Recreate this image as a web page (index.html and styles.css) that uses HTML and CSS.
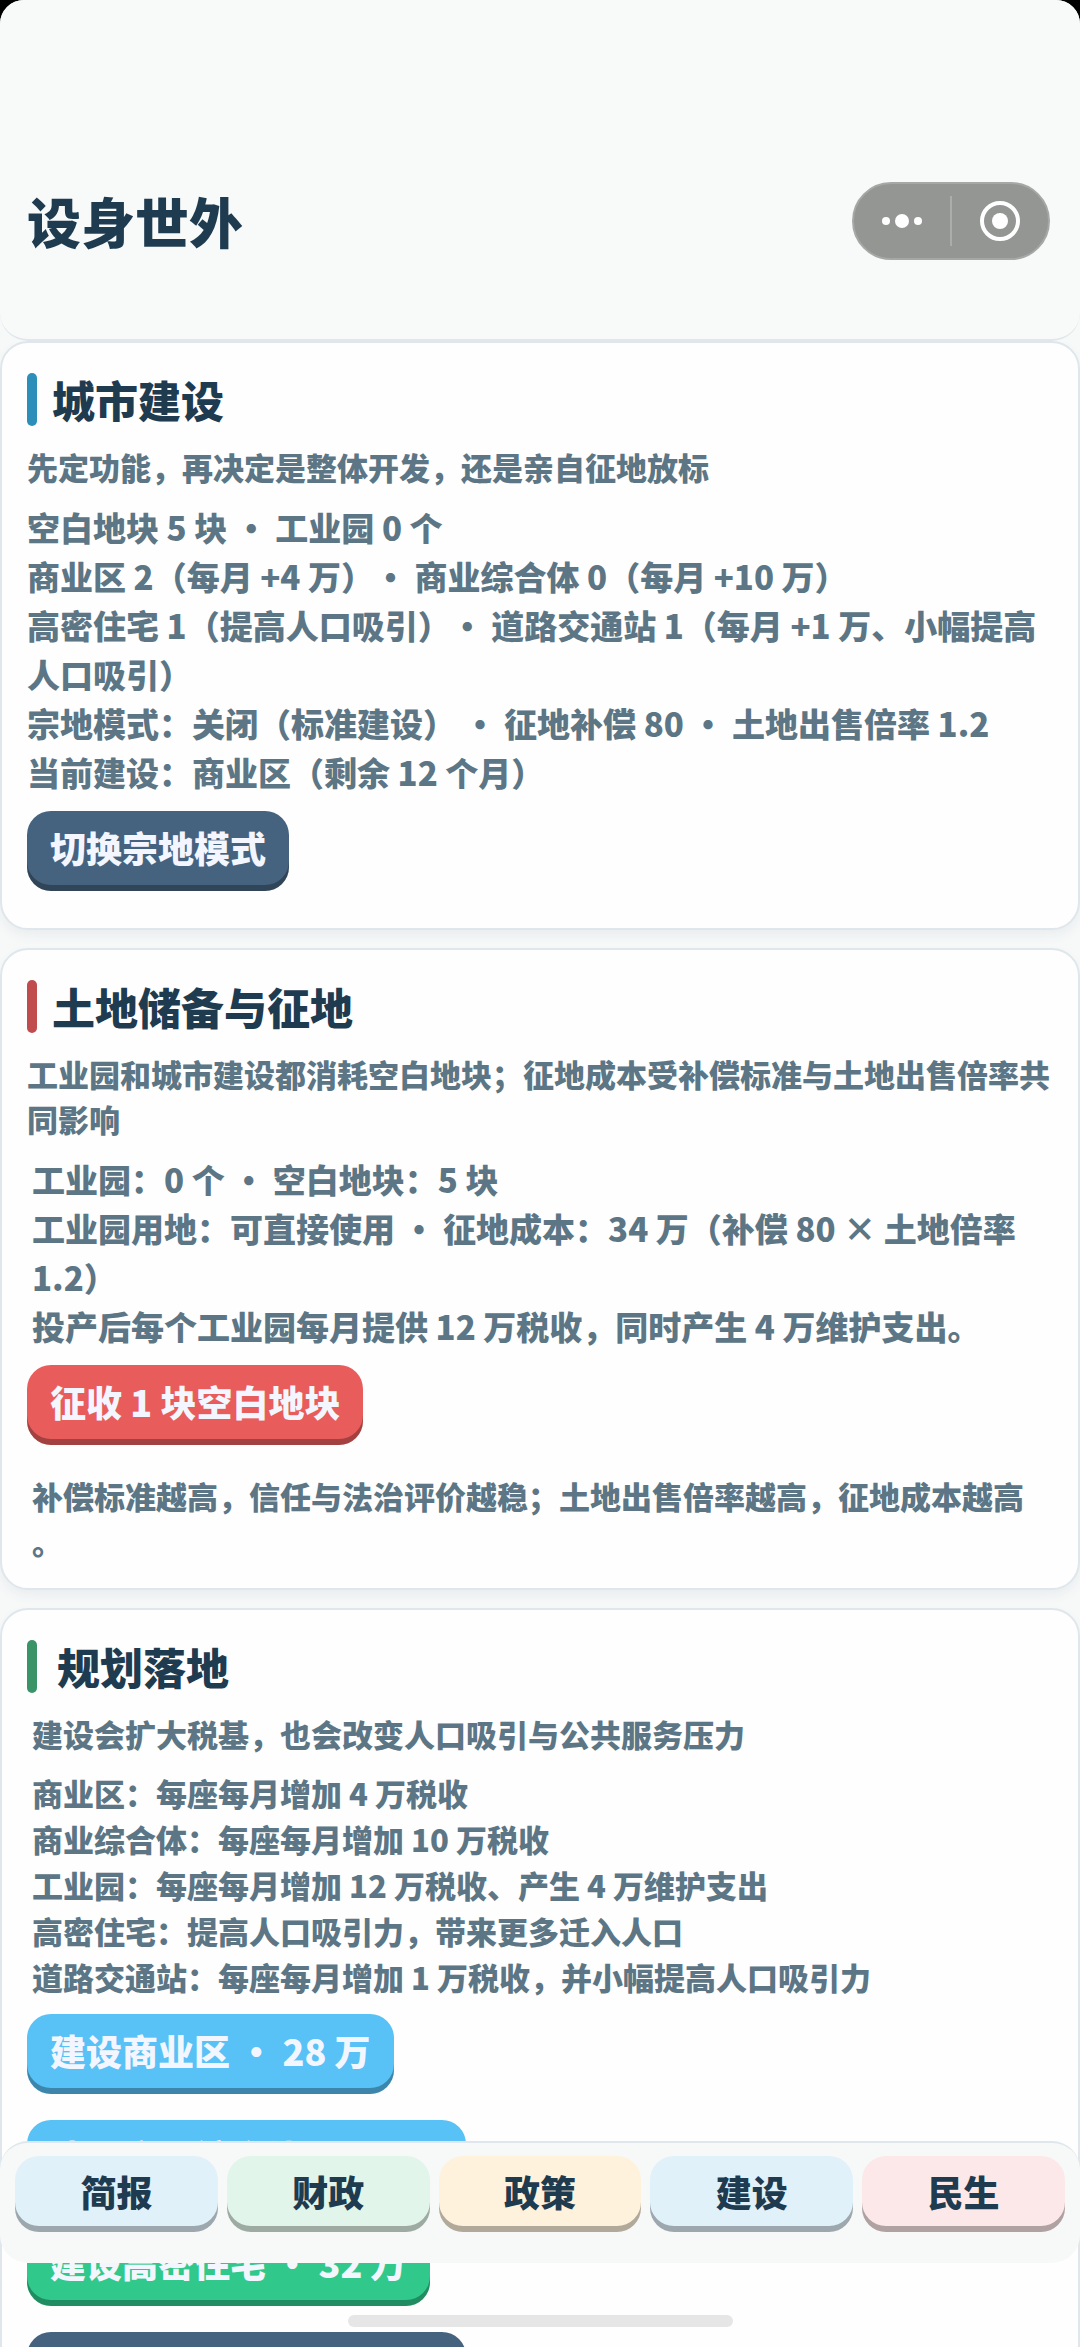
FILE: index.html
```html
<!DOCTYPE html>
<html lang="zh-CN">
<head>
  <meta charset="UTF-8">
  <meta name="viewport" content="width=device-width, initial-scale=1.0">
  <title>设身世外</title>
  <link rel="stylesheet" href="styles.css">
</head>
<body>
  <div class="app">
    <header class="top">
      <h1>设身世外</h1>
      <div class="capsule">
        <button type="button" aria-label="更多">
          <svg width="44" height="44" viewBox="0 0 44 44" fill="#fff">
            <circle cx="6" cy="22" r="4"/>
            <circle cx="22" cy="22" r="7"/>
            <circle cx="38" cy="22" r="4"/>
          </svg>
        </button>
        <button type="button" aria-label="关闭">
          <svg width="44" height="44" viewBox="0 0 44 44">
            <circle cx="22" cy="22" r="18" fill="none" stroke="#fff" stroke-width="4"/>
            <circle cx="22" cy="22" r="8" fill="#fff"/>
          </svg>
        </button>
      </div>
    </header>

    <main class="content">
      <section class="card">
        <h2 class="blue">城市建设</h2>
        <p class="desc">先定功能，再决定是整体开发，还是亲自征地放标</p>
        <p class="info">
          空白地块 5 块 · 工业园 0 个<br>
          商业区 2（每月 +4 万）· 商业综合体 0（每月 +10 万）<br>
          高密住宅 1（提高人口吸引）· 道路交通站 1（每月 +1 万、小幅提高人口吸引）<br>
          宗地模式：关闭（标准建设） · 征地补偿 80 · 土地出售倍率 1.2<br>
          当前建设：商业区（剩余 12 个月）
        </p>
        <button type="button" class="btn btn-dark">切换宗地模式</button>
      </section>

      <section class="card">
        <h2 class="red">土地储备与征地</h2>
        <p class="desc">工业园和城市建设都消耗空白地块；征地成本受补偿标准与土地出售倍率共同影响</p>
        <p class="info indent">
          工业园：0 个 · 空白地块：5 块<br>
          工业园用地：可直接使用 · 征地成本：34 万（补偿 80 × 土地倍率 1.2）<br>
          投产后每个工业园每月提供 12 万税收，同时产生 4 万维护支出。
        </p>
        <button type="button" class="btn btn-red">征收 1 块空白地块</button>
        <p class="note indent">补偿标准越高，信任与法治评价越稳；土地出售倍率越高，征地成本越高。</p>
      </section>

      <section class="card">
        <h2 class="green">规划落地</h2>
        <p class="desc indent">建设会扩大税基，也会改变人口吸引与公共服务压力</p>
        <p class="info small indent">
          商业区：每座每月增加 4 万税收<br>
          商业综合体：每座每月增加 10 万税收<br>
          工业园：每座每月增加 12 万税收、产生 4 万维护支出<br>
          高密住宅：提高人口吸引力，带来更多迁入人口<br>
          道路交通站：每座每月增加 1 万税收，并小幅提高人口吸引力
        </p>
        <button type="button" class="btn btn-blue">建设商业区 · 28 万</button>
        <button type="button" class="btn btn-blue">建设商业综合体 · 68 万</button>
        <button type="button" class="btn btn-green">建设高密住宅 · 32 万</button>
        <button type="button" class="btn btn-dark">建设道路交通站 · 24 万</button>
      </section>
    </main>

    <nav class="tabs">
      <button type="button" class="tab tab-blue">简报</button>
      <button type="button" class="tab tab-green">财政</button>
      <button type="button" class="tab tab-yellow">政策</button>
      <button type="button" class="tab tab-blue">建设</button>
      <button type="button" class="tab tab-red">民生</button>
    </nav>
    <div class="home-bar"></div>
  </div>
</body>
</html>
```

FILE: styles.css
```css
* {
  box-sizing: border-box;
}
body {
  margin: 0;
  background: #000;
  color: #5c7685;
  font-family: "Noto Sans CJK SC", sans-serif;
  font-weight: 900;
  text-spacing-trim: space-all;
}
h1, h2, p {
  margin: 0;
  font-weight: 900;
}
button {
  border: 0;
  font-family: inherit;
  font-weight: inherit;
  cursor: pointer;
}
.app {
  position: relative;
  display: flex;
  flex-direction: column;
  height: 100vh;
  overflow: hidden;
  background: #f7f9f9;
  border-radius: 24px 24px 0 0;
}

/* 顶部标题栏 */
.top {
  display: flex;
  align-items: center;
  justify-content: space-between;
  padding: 182px 30px 79px 27px;
  border-bottom: 2px solid #dfe7ec;
  border-radius: 0 0 28px 28px;
  background: #f8faf9;
}
.top h1 {
  font-size: 54px;
  line-height: 78px;
  color: #1f3b50;
}
.capsule {
  display: flex;
  align-items: center;
  width: 198px;
  height: 78px;
  border: 2px solid #a6a8a6;
  border-radius: 39px;
  background: #949694;
}
.capsule button {
  display: flex;
  flex: 1;
  align-items: center;
  justify-content: center;
  height: 50px;
  padding: 0;
  background: none;
}
.capsule button + button {
  border-left: 2px solid #abadab;
}

/* 卡片 */
.content {
  flex: 1;
  display: flex;
  flex-direction: column;
  gap: 18px;
  min-height: 0;
  overflow-y: auto;
  scrollbar-width: none;
}
.card {
  display: flex;
  flex-direction: column;
  align-items: flex-start;
  flex-shrink: 0;
  padding: 30px 12px 25px 25px;
  border: 2px solid #dfe7ec;
  border-radius: 28px;
  background: #fefefe;
  box-shadow: 0 6px 12px rgba(31, 59, 80, 0.06);
}
.card h2 {
  display: flex;
  align-items: center;
  gap: 15px;
  margin-bottom: 18px;
  font-size: 43px;
  line-height: 53px;
  color: #1f3b50;
}
.card h2::before {
  content: "";
  width: 10px;
  height: 53px;
  border-radius: 5px;
}
.card h2.blue::before {
  background: #2c8fba;
}
.card h2.red::before {
  background: #c04c4e;
}
.card h2.green {
  gap: 20px;
}
.card h2.green::before {
  background: #3a9468;
}
.desc, .note {
  font-size: 31px;
  line-height: 45px;
}
.info {
  margin-top: 14px;
  font-size: 33px;
  line-height: 49px;
}
.info.small {
  font-size: 31px;
  line-height: 46px;
}
.indent {
  padding-left: 5px;
}
.note {
  margin-top: 16px;
  padding-right: 14px;
  line-break: anywhere;
}
.btn {
  height: 80px;
  margin: 14px 0 12px;
  padding: 0 23px 8px;
  border-radius: 24px;
  font-size: 36px;
  color: #f3f6ff;
  box-shadow: inset 0 -6px rgba(0, 0, 0, 0.3);
}
.btn-dark {
  background: #45637f;
}
.btn-red {
  background: #e85d5b;
}
.btn-blue {
  background: #58c1f5;
}
.btn-green {
  background: #30c98b;
}

/* 底部导航 */
.tabs {
  position: absolute;
  right: 0;
  bottom: 84px;
  left: 0;
  display: flex;
  gap: 9px;
  padding: 13px 15px 31px;
  border-top: 2px solid #dfe7ec;
  border-radius: 28px;
  background: #f7f9f9;
}
.tab {
  flex: 1;
  height: 76px;
  padding: 0 0 6px;
  border-radius: 24px;
  font-size: 36px;
  color: #1f3b50;
  box-shadow: inset 0 -6px rgba(0, 0, 0, 0.3);
}
.tab-blue {
  background: #e1f1f9;
}
.tab-green {
  background: #e1f5ea;
}
.tab-yellow {
  background: #fef2dc;
}
.tab-red {
  background: #fce8e8;
}
.home-bar {
  position: absolute;
  bottom: 20px;
  left: 50%;
  width: 385px;
  height: 12px;
  margin-left: -192px;
  border-radius: 6px;
  background: #e6e6e6;
}
```
